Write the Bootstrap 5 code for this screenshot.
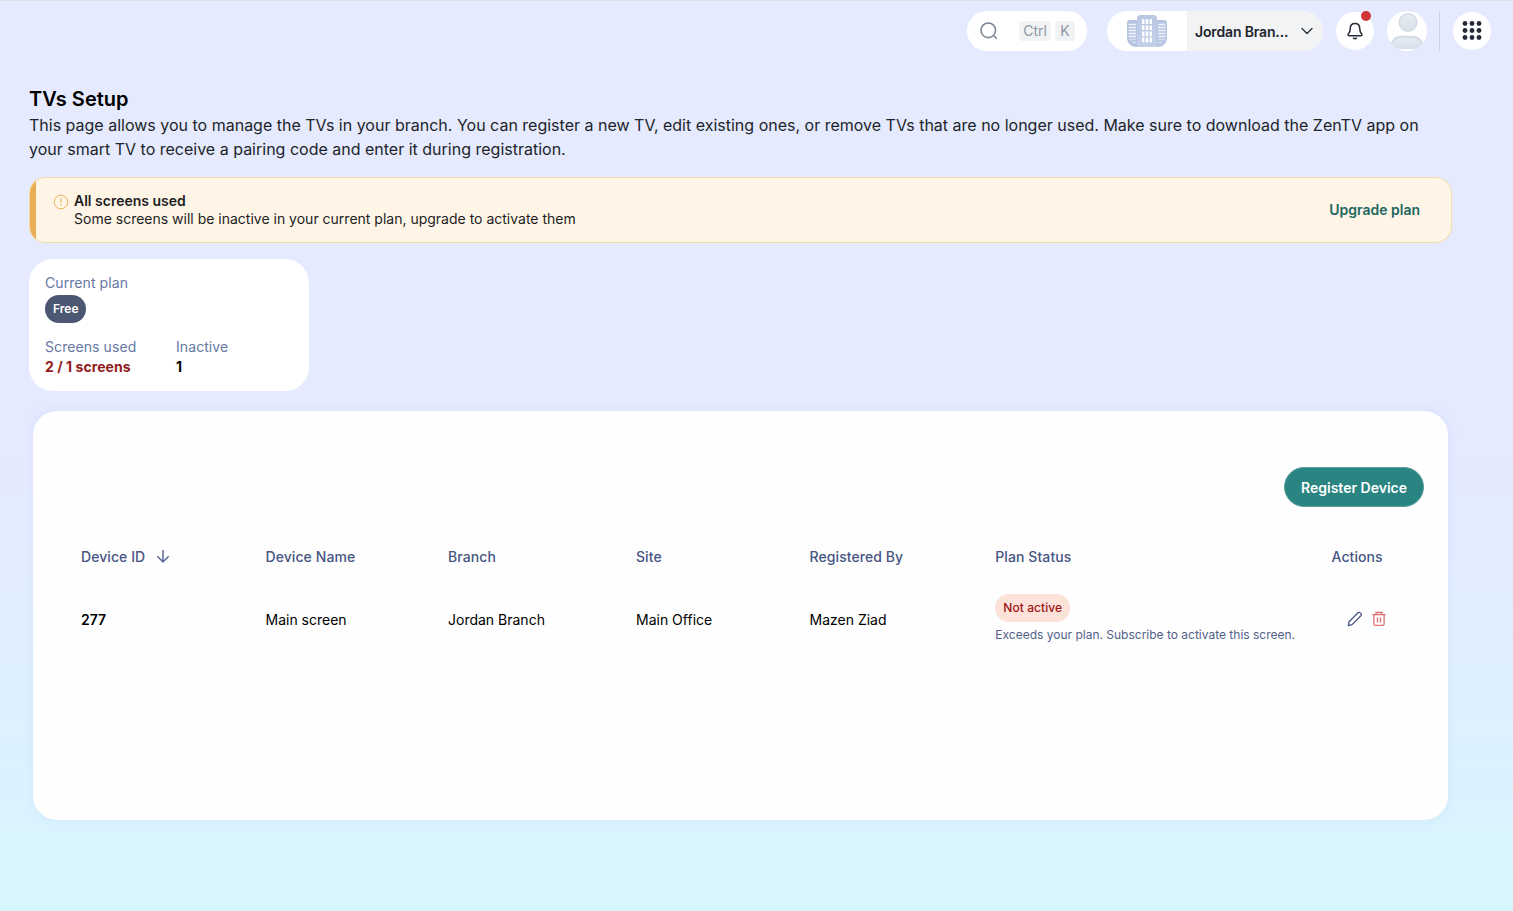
<!DOCTYPE html>
<html lang="en">
<head>
<meta charset="utf-8">
<meta name="viewport" content="width=device-width, initial-scale=1">
<title>TVs Setup</title>
<link href="https://cdn.jsdelivr.net/npm/bootstrap@5.3.0/dist/css/bootstrap.min.css" rel="stylesheet">
<style>
body{font-family:Inter,"Liberation Sans",sans-serif;font-size:14px;line-height:20px;color:#000;height:911px;overflow:hidden;background:linear-gradient(180deg,#e5eaff 50%,#d8f6fe 100%) no-repeat;border-top:1px solid #dbe4e6}
svg{display:block;flex:none}
.topbar{height:61px;padding:10px 22px 11px 0}
.pill{height:40px;border-radius:20px}
.search-pill{width:120px;padding:0 12px;margin-right:20px}
.keycap{background:#f2f3f5;color:#8f96a3;border-radius:4px;width:20px;height:20px;line-height:20px;text-align:center}
.keycap-wide{width:32px}
.branch-pill{width:216px;margin-right:13px}
.branch-logo{width:80px}
.branch-name{background:#f2f3f5;font-weight:600;color:#20242c;padding:2px 9px 0 8px}
.branch-name span{letter-spacing:-.15px}
.branch-name svg{margin-top:-2px}
.round-btn{width:38px;height:38px;background:#fff}
.alert-dot{width:10px;height:10px;background:#cf3535;top:-1px;right:3px}
.avatar{margin-left:13px}
.split{width:1px;height:40px;background:#cdd2e3;margin:0 13px 0 12px}
.page{padding:25px 61px 0 29px}
.page h1{font-size:20px;line-height:24px;font-weight:600;margin:0}
.lead-in{font-size:16px;line-height:24px;color:#212529;margin:2px 0 16px}
.notice{width:1423px;height:66px;border:1px solid #f3dca6;border-radius:16px;background:#fef5e7;overflow:hidden}
.notice-bar{width:6px;background:#e9ae53}
.notice-body{padding:0 24px 0 17px}
.notice-text{line-height:18px;color:#1d1d1f;margin-left:5px}
.upgrade{color:#1d665f;font-weight:600;margin-right:7px}
.plan-box{width:280px;height:132px;border-radius:24px;background:#fff;margin-top:16px;padding:14px 16px}
.muted-label{color:#6678a3;letter-spacing:.08px}
.free-tag{height:28px;border-radius:14px;background:#4c5773;color:#fff;font-size:12px;line-height:28px;font-weight:600;padding:0 8px;margin-top:2px}
.plan-stats{margin-top:14px}
.used-col{width:131px}
.over{color:#921b1b;letter-spacing:.06px}
.panel{width:1415px;height:409px;border-radius:24px;background:#fefefe;margin:20px 0 0 4px;padding-top:56px;box-shadow:0 0 10px rgba(170,190,235,.22)}
.register{width:140px;height:40px;border-radius:20px;background:#298482;border:1px solid #5b9e9e;color:#fff;font-size:14px;line-height:20px;font-weight:600;padding:1px 0 0;margin-right:24px}
.devices{display:grid;grid-template-columns:184.5px 182.5px 188px 173.5px 185.8px 336.2px 1fr;padding-left:48px;margin-top:40px}
.devices .head{font-weight:500;color:#475582;height:20px;letter-spacing:.08px}
.devices .cell{margin-top:43px}
.status-cell{margin-top:27px}
.actions{padding:1px 0 0 15.5px}
.state{height:28px;line-height:27px;border-radius:14px;background:#fde2da;color:#a11313;font-size:12px;font-weight:500;padding:0 8px;letter-spacing:.06px}
.state-note{font-size:12px;line-height:16px;color:#53618a;margin-top:5px;white-space:nowrap}
</style>
</head>
<body>
<header class="topbar d-flex justify-content-end align-items-center">
  <div class="pill search-pill bg-white d-flex align-items-center">
    <svg width="20" height="20" viewBox="0 0 20 20" fill="none" stroke="#7d8694" stroke-width="1.6" stroke-linecap="round"><circle cx="9.3" cy="9.3" r="7.3"/><path d="M15 15l2.300 2.300"/></svg>
    <span class="keycap keycap-wide ms-auto me-1">Ctrl</span><span class="keycap">K</span>
  </div>
  <div class="pill branch-pill bg-white d-flex overflow-hidden">
    <div class="branch-logo d-flex align-items-center justify-content-center">
      <svg width="40" height="32" viewBox="0 0 40 32">
        <defs><linearGradient id="wall" x2="0" y2="1"><stop stop-color="#b9c7e3"/><stop offset="1" stop-color="#c3d0e8"/></linearGradient></defs>
        <path d="M0 8q0-3 3-3h8v27H9q-8-1-9-8z" fill="#b5c4e2"/><path d="M40 8q0-3-3-3h-8v27h2q8-1 9-8z" fill="#b5c4e2"/>
        <path d="M1.500 9.500H9M1.500 12.500H9M1.500 15.500H9M1.500 18.500H9M1.500 21.500H9M31 9.500h7.500M31 12.500h7.500M31 15.500h7.500M31 18.500h7.500M31 21.500h7.500" stroke="#eef3fb" stroke-width="1.600"/>
        <path d="M2 24.500h7M31 24.500h7M5 27.500h4M31 27.500h4" stroke="#d5dff0" stroke-width="1.400"/>
        <path d="M10 32V3q0-3 4-3h12q4 0 4 3v29z" fill="url(#wall)"/>
        <g fill="#fff"><g id="floor"><path d="M15 4.300h2.400v4.700H15zM18.700 4.300h2.500v4.700h-2.500zM22.500 4.300H25v4.700h-2.500z"/></g><use href="#floor" y="6.100"/><use href="#floor" y="12.200"/><use href="#floor" y="18.300"/></g>
      </svg>
    </div>
    <div class="branch-name flex-fill d-flex align-items-center justify-content-between">
      <span>Jordan Bran...</span>
      <svg width="14" height="14" viewBox="0 0 14 14" fill="none" stroke="#30343c" stroke-width="1.4" stroke-linecap="round" stroke-linejoin="round"><path d="M2 4.500l5 5 5-5"/></svg>
    </div>
  </div>
  <div class="round-btn rounded-circle position-relative d-flex align-items-center justify-content-center">
    <svg width="18" height="20" viewBox="0 0 18 20" fill="none" stroke="#242936" stroke-width="1.5" stroke-linecap="round" stroke-linejoin="round"><path d="M9 2.500C6 2.500 4.300 4.700 4.300 7.300c0 3.200-.8 4.400-1.800 5.500-.8 1-.5 1.900.6 1.900h11.800c1.100 0 1.400-.9.600-1.900-1-1.100-1.800-2.300-1.800-5.500C13.700 4.700 12 2.500 9 2.500z"/><path d="M7.500 17.200q1.500 1 3 0"/></svg>
    <span class="alert-dot rounded-circle position-absolute"></span>
  </div>
  <div class="avatar">
    <svg width="40" height="40" viewBox="0 0 40 40"><defs><clipPath id="face"><circle cx="20" cy="20" r="20"/></clipPath><linearGradient id="tone" x2="0" y2="1"><stop stop-color="#e9edf3"/><stop offset="1" stop-color="#d8dfea"/></linearGradient></defs><g clip-path="url(#face)"><path d="M0 0h40v40H0z" fill="#fff"/><circle cx="21" cy="11.500" r="8.700" fill="url(#tone)" stroke="#d5dbe6" stroke-width="1.600"/><path d="M3.500 38q1-13 11-13h11q10 0 11 13z" fill="url(#tone)"/><path d="M4.500 33.500q2.500-7.800 10.500-7.800h10q8 0 10.500 7.800" fill="none" stroke="#d5dbe6" stroke-width="2"/></g></svg>
  </div>
  <div class="split"></div>
  <div class="round-btn rounded-circle d-flex align-items-center justify-content-center">
    <svg width="20" height="20" viewBox="0 0 20 20" fill="#252b38"><g id="dots"><circle cx="3" cy="2.500" r="2.400"/><circle cx="10" cy="2.500" r="2.400"/><circle cx="17" cy="2.500" r="2.400"/></g><use href="#dots" y="7"/><use href="#dots" y="14"/></svg>
  </div>
</header>
<main class="page">
  <h1>TVs Setup</h1>
  <p class="lead-in">This page allows you to manage the TVs in your branch. You can register a new TV, edit existing ones, or remove TVs that are no longer used. Make sure to download the ZenTV app on<br>your smart TV to receive a pairing code and enter it during registration.</p>
  <section class="notice d-flex">
    <div class="notice-bar"></div>
    <div class="notice-body d-flex flex-fill align-items-center">
      <svg class="align-self-start mt-3" width="16" height="16" viewBox="0 0 16 16" fill="none" stroke="#ecb45c"><circle cx="8" cy="8" r="6.800"/><path d="M8 4.200v4.600M8 10.500v1.500" stroke-width="1.200"/></svg>
      <div class="notice-text"><div class="fw-semibold">All screens used</div><div>Some screens will be inactive in your current plan, upgrade to activate them</div></div>
      <a href="#" class="upgrade ms-auto text-decoration-none">Upgrade plan</a>
    </div>
  </section>
  <section class="plan-box">
    <div class="muted-label">Current plan</div>
    <span class="free-tag d-inline-block align-top">Free</span>
    <div class="d-flex plan-stats">
      <div class="used-col"><div class="muted-label">Screens used</div><div class="over fw-bold">2 / 1 screens</div></div>
      <div><div class="muted-label">Inactive</div><div class="fw-bold">1</div></div>
    </div>
  </section>
  <section class="panel">
    <div class="d-flex justify-content-end"><button class="btn register">Register Device</button></div>
    <div class="devices">
      <div class="head d-flex align-items-center">Device ID <svg class="ms-2" width="20" height="20" viewBox="0 0 20 20" fill="none" stroke="#5b6994" stroke-width="1.500"><path d="M10 3v12M4.300 9.300L10 15l5.700-5.700"/></svg></div>
      <div class="head">Device Name</div><div class="head">Branch</div><div class="head">Site</div><div class="head">Registered By</div><div class="head">Plan Status</div><div class="head">Actions</div>
      <div class="cell fw-semibold">277</div><div class="cell">Main screen</div><div class="cell">Jordan Branch</div><div class="cell">Main Office</div><div class="cell">Mazen Ziad</div>
      <div class="status-cell"><span class="state d-inline-block align-top">Not active</span><div class="state-note">Exceeds your plan. Subscribe to activate this screen.</div></div>
      <div class="cell actions d-flex gap-2">
        <svg width="16" height="16" viewBox="0 0 16 16" fill="none" stroke="#475582" stroke-width="1.300" stroke-linejoin="round"><path d="M1.300 14.700l.8-4L11 1.800q1.300-1 2.600.3 1.300 1.300.3 2.600L5 13.600z"/></svg>
        <svg width="16" height="16" viewBox="0 0 16 16" fill="none" stroke="#dd7272" stroke-width="1.300"><path d="M1.300 3.700h13.400M5 3.500V1.500h6v2M2.900 3.900v9.200q0 1.300 1.300 1.300h7.600q1.300 0 1.300-1.300V3.900M6.500 6.500v5M9.500 6.500v5"/></svg>
      </div>
    </div>
  </section>
</main>
<script src="https://cdn.jsdelivr.net/npm/bootstrap@5.3.0/dist/js/bootstrap.bundle.min.js"></script>
</body>
</html>
